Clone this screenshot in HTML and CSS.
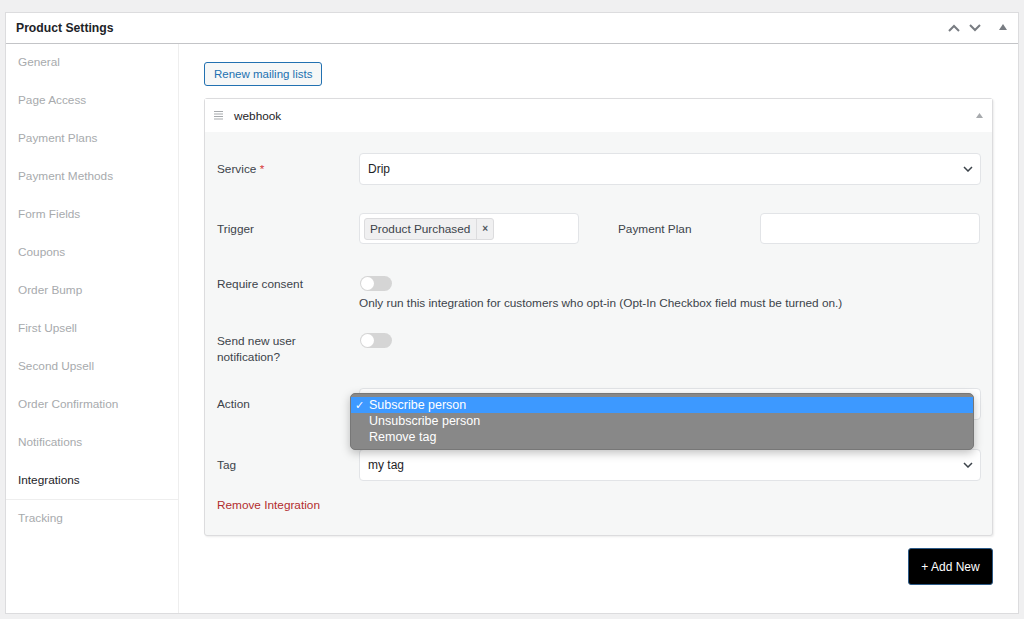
FILE: index.html
```html
<!DOCTYPE html>
<html>
<head>
<meta charset="utf-8">
<link rel="stylesheet" href="styles.css">
</head>
<body>
<div class="panel">
  <div class="panel-head">
    <h2 class="panel-title">Product Settings</h2>
    <div class="panel-tools">
      <svg class="tool" width="14" height="10" viewBox="0 0 14 10"><path d="M2 8 L7 3 L12 8" fill="none" stroke="#787c82" stroke-width="2"/></svg>
      <svg class="tool" width="14" height="10" viewBox="0 0 14 10"><path d="M2 2 L7 7 L12 2" fill="none" stroke="#787c82" stroke-width="2"/></svg>
      <svg class="tool tool-caret" width="8" height="6" viewBox="0 0 8 6"><path d="M0 6 L4 0 L8 6 Z" fill="#787c82"/></svg>
    </div>
  </div>
  <div class="panel-body">
    <ul class="tabs">
      <li class="tab">General</li>
      <li class="tab">Page Access</li>
      <li class="tab">Payment Plans</li>
      <li class="tab">Payment Methods</li>
      <li class="tab">Form Fields</li>
      <li class="tab">Coupons</li>
      <li class="tab">Order Bump</li>
      <li class="tab">First Upsell</li>
      <li class="tab">Second Upsell</li>
      <li class="tab">Order Confirmation</li>
      <li class="tab">Notifications</li>
      <li class="tab tab-active">Integrations</li>
      <li class="tab">Tracking</li>
    </ul>
    <div class="main">
      <div class="toolbar"><button class="btn-secondary">Renew mailing lists</button></div>
      <div class="card">
        <div class="card-head">
          <svg class="handle" width="9" height="9" viewBox="0 0 9 9"><path d="M0 0.5H9M0 3H9M0 5.5H9M0 8H9" stroke="#a7aaad" stroke-width="1"/></svg>
          <span class="card-title">webhook</span>
          <svg class="card-caret" width="7" height="5" viewBox="0 0 7 5"><path d="M0 5 L3.5 0 L7 5 Z" fill="#a7aaad"/></svg>
        </div>
        <div class="card-body">
          <div class="row row-a">
            <label class="field-label">Service <span class="req">*</span></label>
            <div class="select select-full">
              <span>Drip</span>
              <svg class="chev" width="10" height="6" viewBox="0 0 10 6"><path d="M1 1 L5 5 L9 1" fill="none" stroke="#3c434a" stroke-width="1.5"/></svg>
            </div>
          </div>
          <div class="row row-b">
            <div class="half">
              <label class="field-label">Trigger</label>
              <div class="input input-half">
                <span class="chip"><span class="chip-text">Product Purchased</span><span class="chip-x">×</span></span>
              </div>
            </div>
            <div class="half">
              <label class="field-label">Payment Plan</label>
              <div class="input input-half"></div>
            </div>
          </div>
          <div class="row row-c row-top">
            <label class="field-label">Require consent</label>
            <div class="control">
              <span class="toggle"><span class="knob"></span></span>
              <p class="help">Only run this integration for customers who opt-in (Opt-In Checkbox field must be turned on.)</p>
            </div>
          </div>
          <div class="row row-n row-top">
            <label class="field-label">Send new user notification?</label>
            <div class="control">
              <span class="toggle"><span class="knob"></span></span>
            </div>
          </div>
          <div class="row row-d">
            <label class="field-label">Action</label>
            <div class="select select-full select-anchor">
              <span></span>
              <svg class="chev" width="10" height="6" viewBox="0 0 10 6"><path d="M1 1 L5 5 L9 1" fill="none" stroke="#3c434a" stroke-width="1.5"/></svg>
              <div class="menu">
                <div class="opt opt-on"><span class="check">✓</span>Subscribe person</div>
                <div class="opt">Unsubscribe person</div>
                <div class="opt">Remove tag</div>
              </div>
            </div>
          </div>
          <div class="row row-e">
            <label class="field-label">Tag</label>
            <div class="select select-full">
              <span>my tag</span>
              <svg class="chev" width="10" height="6" viewBox="0 0 10 6"><path d="M1 1 L5 5 L9 1" fill="none" stroke="#3c434a" stroke-width="1.5"/></svg>
            </div>
          </div>
          <div class="row-last"><a class="remove">Remove Integration</a></div>
        </div>
      </div>
      <div class="actions"><button class="btn-dark">+ Add New</button></div>
    </div>
  </div>
</div>
</body>
</html>
```

FILE: styles.css
```css
* { box-sizing: border-box; }
html, body { margin: 0; padding: 0; }
body {
  background: #f0f0f1;
  font-family: "Liberation Sans", Arial, sans-serif;
  font-size: 11.8px;
  color: #3c434a;
  height: 619px;
  overflow: hidden;
}
.panel {
  margin: 12px 5px 0 5px;
  height: 602px;
  background: #fff;
  border: 1px solid #dcdcde;
  display: flex;
  flex-direction: column;
}
.panel-head {
  height: 31px;
  border-bottom: 1px solid #c3c4c7;
  display: flex;
  align-items: center;
  justify-content: space-between;
  padding: 0 11px 0 10px;
}
.panel-title {
  margin: 0;
  font-size: 12.2px;
  font-weight: bold;
  color: #1d2327;
}
.panel-tools { display: flex; align-items: center; }
.tool { margin-left: 7px; }
.tool-caret { margin-left: 17px; margin-top: -2px; }
.panel-body { flex: 1; display: flex; }
.tabs {
  list-style: none;
  margin: 0;
  padding: 0;
  width: 173px;
  border-right: 1px solid #eeeeee;
}
.tab {
  height: 38px;
  line-height: 36px;
  padding-left: 12px;
  color: #a7aaad;
}
.tab-active {
  color: #1d2327;
  border-bottom: 1px solid #eeeeee;
}
.main {
  flex: 1;
  padding: 18px 25px 0 25px;
}
.toolbar { height: 24px; }
.btn-secondary {
  height: 24px;
  padding: 0 9px;
  font-family: inherit;
  font-size: 11.5px;
  color: #2271b1;
  background: #f6f7f7;
  border: 1px solid #2271b1;
  border-radius: 3px;
}
.card {
  margin-top: 12px;
  border: 1px solid #dcdcde;
  border-radius: 3px;
  box-shadow: 1px 1px 2px rgba(0,0,0,0.08);
  background: #f6f7f7;
}
.card-head {
  height: 33px;
  background: #fff;
  display: flex;
  align-items: center;
  padding: 0 9px 0 9px;
}
.handle { margin-right: 11px; }
.card-title { color: #1d2327; flex: 1; }
.card-caret { margin-top: -1px; }
.card-body { padding: 21px 11px 22px 12px; }
.row { display: flex; align-items: center; }
.row-top { align-items: flex-start; }
.row-a { margin-bottom: 28px; }
.row-b { margin-bottom: 32px; }
.row-c { margin-bottom: 22px; }
.row-n { margin-bottom: 23px; }
.row-d { margin-bottom: 29px; }
.row-e { margin-bottom: 16px; }
.field-label {
  width: 142px;
  flex: none;
  padding-right: 30px;
  line-height: 16px;
  color: #3c434a;
}
.req { color: #d63638; }
.half { display: flex; align-items: center; width: 362px; }
.half + .half { margin-left: 39px; }
.select, .input {
  background: #fff;
  border: 1px solid #e2e4e7;
  border-radius: 4px;
}
.select {
  height: 32px;
  display: flex;
  align-items: center;
  justify-content: space-between;
  padding: 0 7px 0 8px;
  color: #1d2327;
  font-size: 12px;
}
.select-full { width: 622px; }
.input { height: 31px; display: flex; align-items: center; padding: 0 4px; }
.input-half { width: 220px; }
.chip {
  display: inline-flex;
  align-items: center;
  height: 22px;
  background: #f0f0f1;
  border: 1px solid #dcdcde;
  border-radius: 3px;
  color: #3c434a;
}
.chip-text { padding: 0 6px 0 5px; }
.chip-x {
  border-left: 1px solid #dcdcde;
  height: 20px;
  line-height: 20px;
  padding: 0 5px 0 5px;
  font-weight: bold;
  font-size: 10px;
  color: #50575e;
}
.control { display: flex; flex-direction: column; }
.toggle {
  width: 32px;
  height: 15px;
  border-radius: 8px;
  background: #d5d5d5;
  position: relative;
  margin-left: 1px;
}
.knob {
  position: absolute;
  left: 1px;
  top: 1px;
  width: 13px;
  height: 13px;
  border-radius: 50%;
  background: #fff;
}
.help { margin: 4px 0 0 0; line-height: 16px; color: #3c434a; }
.select-anchor { position: relative; }
.menu {
  position: absolute;
  left: -10px;
  top: 4px;
  width: 624px;
  height: 57px;
  background: #888888;
  border: 1px solid #777;
  border-radius: 5px;
  box-shadow: 0 3px 10px rgba(0,0,0,0.25);
  padding-top: 3px;
  font-size: 12.5px;
  color: #fff;
  z-index: 5;
}
.opt {
  height: 16px;
  line-height: 16px;
  padding-left: 18px;
  position: relative;
}
.opt-on { background: #3d99ff; }
.check {
  position: absolute;
  left: 4px;
  top: 0;
  font-size: 11px;
}
.row-last { line-height: 16px; }
.remove { color: #b32d2e; }
.actions { display: flex; justify-content: flex-end; margin-top: 12px; }
.btn-dark {
  width: 85px;
  height: 37px;
  background: #000;
  color: #fff;
  border: 1px solid #2c5a87;
  border-radius: 3px;
  font-family: inherit;
  font-size: 12px;
}
```
